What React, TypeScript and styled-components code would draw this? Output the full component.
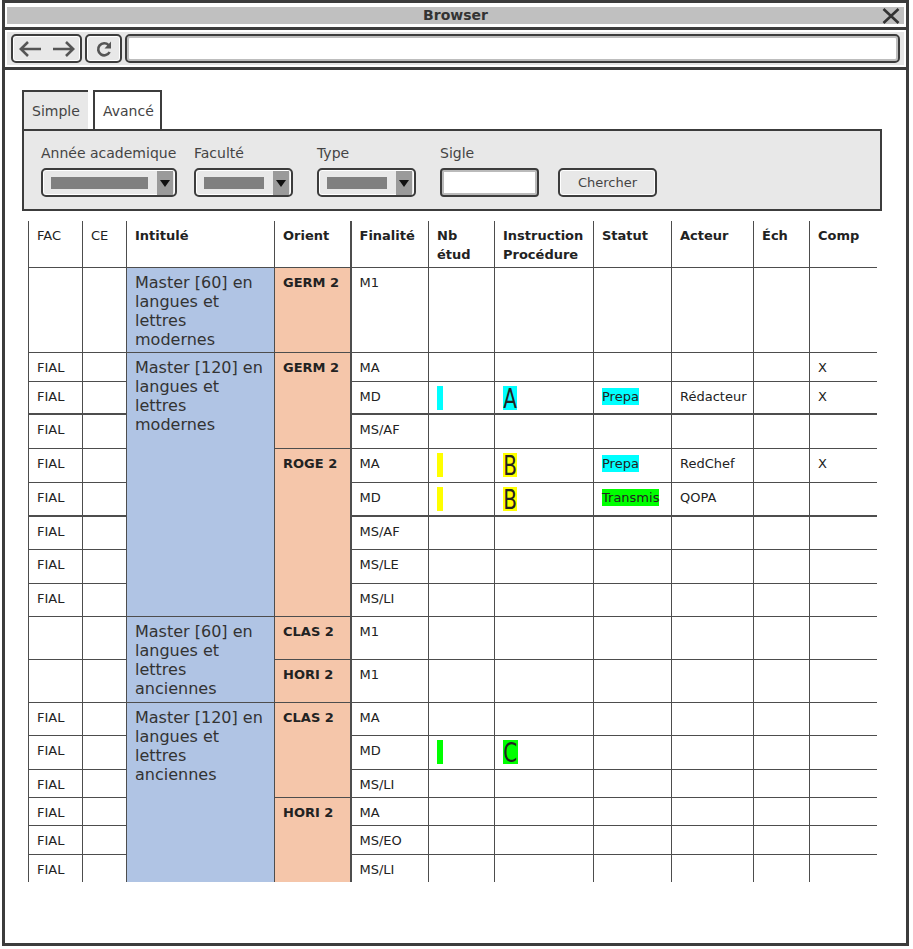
import React from 'react';
import styled, { createGlobalStyle } from 'styled-components';

const FONT = `"DejaVu Sans", "Liberation Sans", sans-serif`;
const DARK = '#3c3c3c';
const LINE = '#4d4d4d';
const PANEL = '#e8e8e8';
const BLUE = '#b0c4e4';
const SALMON = '#f5c6aa';
const CYAN = '#00ffff';
const YELLOW = '#ffff00';
const GREEN = '#00ff00';

const GlobalStyle = createGlobalStyle`
  html, body { margin: 0; padding: 0; background: #fff; }
  body { font-family: ${FONT}; color: #333; }
  * { box-sizing: border-box; }
`;

const Frame = styled.div`
  margin-left: 2px;
  width: 907px;
  height: 946px;
  border: 3px solid ${DARK};
  background: #fff;
  display: flex;
  flex-direction: column;
`;

const TitleBar = styled.div`
  flex: none;
  margin: 4px 2px 3px;
  height: 17px;
  background: #c0c0c0;
  display: grid;
  grid-template-columns: 1fr auto 1fr;
  align-items: center;
  font: bold 14px/17px ${FONT};
  color: #333;
`;

const Title = styled.span`
  grid-column: 2;
`;

const CloseIcon = styled.svg`
  grid-column: 3;
  justify-self: end;
  margin-right: 4px;
  display: block;
`;

const Rule = styled.div`
  flex: none;
  height: 3px;
  background: ${DARK};
`;

const Toolbar = styled.div`
  flex: none;
  margin: 2px;
  height: 33px;
  background: #e6e6e6;
  display: flex;
  align-items: center;
  gap: 3px;
  padding: 0 4px;
`;

const NavButton = styled.div<{ $w: number }>`
  flex: none;
  width: ${(p) => p.$w}px;
  height: 29px;
  border: 2px solid ${DARK};
  border-radius: 5px;
  box-shadow: inset 0 0 0 1px #fff;
  background: #e8e8e8;
  display: flex;
  align-items: center;
  justify-content: center;
  gap: 10px;
`;

const UrlField = styled.div`
  flex: 1;
  height: 29px;
  border: 2px solid ${DARK};
  border-radius: 5px;
  box-shadow: inset 0 0 0 2px #bdbdbd;
  background: #fff;
`;

const Content = styled.div`
  flex: 1;
  padding: 20px 0 0 17px;
`;

const Tabs = styled.div`
  display: flex;
  align-items: flex-end;
`;

const Tab = styled.div<{ $active?: boolean; $w: number }>`
  width: ${(p) => p.$w}px;
  height: 39px;
  padding-left: 8px;
  border: 2px solid ${DARK};
  border-bottom: 0;
  display: flex;
  align-items: center;
  font-size: 14px;
  color: #444;
  ${(p) =>
    p.$active
      ? `border-right: 0; margin-right: 5px; background: ${PANEL};`
      : 'background: #fff;'}
`;

const Panel = styled.div`
  width: 860px;
  height: 82px;
  border: 2px solid ${DARK};
  background: ${PANEL};
  padding: 14px 0 0 17px;
  display: grid;
  grid-template-columns: 153px 123px 123px 118px 99px;
  grid-template-rows: 17px 29px;
  row-gap: 6px;
`;

const Label = styled.div`
  grid-row: 1;
  font-size: 14px;
  line-height: 17px;
  color: #444;
  white-space: nowrap;
`;

const Select = styled.div<{ $w: number }>`
  grid-row: 2;
  width: ${(p) => p.$w}px;
  height: 29px;
  border: 2px solid ${DARK};
  border-radius: 5px;
  box-shadow: inset 0 0 0 1px #fff;
  background: ${PANEL};
  display: flex;
  align-items: center;
  padding-left: 8px;
`;

const Placeholder = styled.div<{ $w: number }>`
  width: ${(p) => p.$w}px;
  height: 12px;
  background: #808080;
`;

const Drop = styled.div`
  margin: 1px 2px 0 auto;
  align-self: stretch;
  width: 16px;
  background: #9a9a9a;
  display: flex;
  align-items: center;
  justify-content: center;
  &::after {
    content: '';
    border-left: 5px solid transparent;
    border-right: 5px solid transparent;
    border-top: 7px solid #111;
  }
`;

const TextInput = styled.div`
  grid-row: 2;
  width: 99px;
  height: 29px;
  border: 2px solid ${DARK};
  border-radius: 4px;
  box-shadow: inset 0 0 0 2px #bbb;
  background: #fff;
`;

const SearchButton = styled.div`
  grid-row: 2;
  width: 99px;
  height: 29px;
  border: 2px solid ${DARK};
  border-radius: 5px;
  box-shadow: inset 0 0 0 1px #fff;
  background: ${PANEL};
  display: flex;
  align-items: center;
  justify-content: center;
  font-size: 13px;
  color: #444;
`;

const Table = styled.table`
  margin: 10px 0 0 6px;
  width: 848px;
  table-layout: fixed;
  border-collapse: collapse;
  font-size: 13px;
  color: #222;
`;

const Col = styled.col<{ $w: number }>`
  width: ${(p) => p.$w}px;
`;

const HeadRow = styled.tr`
  height: 46px;
`;

const Th = styled.th<{ $bold?: boolean; $sep?: boolean }>`
  text-align: left;
  vertical-align: top;
  padding: 5px 8px 0;
  font-weight: ${(p) => (p.$bold ? 700 : 400)};
  line-height: 19px;
  border-left: ${(p) => (p.$sep ? 2 : 1)}px solid ${LINE};
`;

const Row = styled.tr<{ $h: number; $thick?: boolean }>`
  height: ${(p) => p.$h}px;
  ${(p) => (p.$thick ? '& > td { border-top-width: 2px; }' : '')}
`;

const Td = styled.td<{ $sep?: boolean }>`
  vertical-align: top;
  padding: 7px 8px 0;
  line-height: 16px;
  border-left: ${(p) => (p.$sep ? 2 : 1)}px solid ${LINE};
  border-top: 1px solid ${LINE};
  white-space: nowrap;
`;

const TitleCell = styled(Td)`
  background: ${BLUE};
  font-size: 16px;
  line-height: 19px;
  padding: 5px 4px 0 8px;
  color: #333;
  white-space: normal;
`;

const OrientCell = styled(Td)`
  background: ${SALMON};
  font-weight: 700;
`;

const Bar = styled.span<{ $c: string }>`
  display: inline-block;
  vertical-align: top;
  margin-top: -3px;
  width: 6px;
  height: 24px;
  background: ${(p) => p.$c};
`;

const Letter = styled.span<{ $c: string }>`
  display: inline-block;
  vertical-align: top;
  margin-top: -3px;
  height: 24px;
  padding: 0 0.3px;
  background: ${(p) => p.$c};
`;

const Glyph = styled.span`
  display: inline-block;
  font-size: 20px;
  line-height: 24px;
  transform: scaleY(1.3);
  transform-origin: 50% 9px;
`;

const Tag = styled.span<{ $c: string }>`
  display: inline-block;
  vertical-align: top;
  margin-top: -1px;
  line-height: 17px;
  background: ${(p) => p.$c};
`;

type Line = {
  h: number;
  thick?: boolean;
  fac?: string;
  title?: { text: string; span: number };
  orient?: { text: string; span: number };
  fin: string;
  mark?: string;
  letter?: string;
  status?: { text: string; color: string };
  actor?: string;
  comp?: string;
};

const lines: Line[] = [
  { h: 85, title: { text: 'Master [60] en langues et lettres modernes', span: 1 }, orient: { text: 'GERM 2', span: 1 }, fin: 'M1' },
  { h: 29, fac: 'FIAL', title: { text: 'Master [120] en langues et lettres modernes', span: 8 }, orient: { text: 'GERM 2', span: 3 }, fin: 'MA', comp: 'X' },
  { h: 33, fac: 'FIAL', fin: 'MD', mark: CYAN, letter: 'A', status: { text: 'Prepa', color: CYAN }, actor: 'Rédacteur', comp: 'X' },
  { h: 34, thick: true, fac: 'FIAL', fin: 'MS/AF' },
  { h: 34, fac: 'FIAL', orient: { text: 'ROGE 2', span: 5 }, fin: 'MA', mark: YELLOW, letter: 'B', status: { text: 'Prepa', color: CYAN }, actor: 'RedChef', comp: 'X' },
  { h: 34, fac: 'FIAL', fin: 'MD', mark: YELLOW, letter: 'B', status: { text: 'Transmis', color: GREEN }, actor: 'QOPA' },
  { h: 33, thick: true, fac: 'FIAL', fin: 'MS/AF' },
  { h: 34, fac: 'FIAL', fin: 'MS/LE' },
  { h: 33, fac: 'FIAL', fin: 'MS/LI' },
  { h: 43, title: { text: 'Master [60] en langues et lettres anciennes', span: 2 }, orient: { text: 'CLAS 2', span: 1 }, fin: 'M1' },
  { h: 43, orient: { text: 'HORI 2', span: 1 }, fin: 'M1' },
  { h: 33, fac: 'FIAL', title: { text: 'Master [120] en langues et lettres anciennes', span: 6 }, orient: { text: 'CLAS 2', span: 3 }, fin: 'MA' },
  { h: 34, fac: 'FIAL', fin: 'MD', mark: GREEN, letter: 'C' },
  { h: 28, fac: 'FIAL', fin: 'MS/LI' },
  { h: 28, fac: 'FIAL', orient: { text: 'HORI 2', span: 3 }, fin: 'MA' },
  { h: 29, fac: 'FIAL', fin: 'MS/EO' },
  { h: 28, fac: 'FIAL', fin: 'MS/LI' },
];

const colWidths = [54, 44, 148, 76, 78, 66, 99, 78, 82, 56, 67];

const ArrowLeft = () => (
  <svg width="23" height="16" viewBox="0 0 23 16">
    <path d="M1.5 8 H22 M9 1 L1.8 8 L9 15" stroke="#555" strokeWidth="2.6" fill="none" />
  </svg>
);

const ArrowRight = () => (
  <svg width="23" height="16" viewBox="0 0 23 16">
    <path d="M21.5 8 H1 M14 1 L21.2 8 L14 15" stroke="#555" strokeWidth="2.6" fill="none" />
  </svg>
);

const Reload = () => (
  <svg width="18" height="18" viewBox="0 0 18 18">
    <path d="M13.6 5.2 A6 6 0 1 0 14.6 12" stroke="#555" strokeWidth="2.6" fill="none" />
    <polygon points="16,1.5 16,8.5 9.5,8.5" fill="#555" />
  </svg>
);

export default function App() {
  return (
    <>
      <GlobalStyle />
      <Frame>
        <TitleBar>
          <Title>Browser</Title>
          <CloseIcon width="18" height="16" viewBox="0 0 18 16">
            <path d="M1.5 1 L16.5 15 M16.5 1 L1.5 15" stroke="#333" strokeWidth="2.6" />
          </CloseIcon>
        </TitleBar>
        <Rule />
        <Toolbar>
          <NavButton $w={71}>
            <ArrowLeft />
            <ArrowRight />
          </NavButton>
          <NavButton $w={37}>
            <Reload />
          </NavButton>
          <UrlField />
        </Toolbar>
        <Rule />
        <Content>
          <Tabs>
            <Tab $active $w={66}>Simple</Tab>
            <Tab $w={69}>Avancé</Tab>
          </Tabs>
          <Panel>
            <Label>Année academique</Label>
            <Label>Faculté</Label>
            <Label>Type</Label>
            <Label>Sigle</Label>
            <Select $w={136}>
              <Placeholder $w={97} />
              <Drop />
            </Select>
            <Select $w={99}>
              <Placeholder $w={60} />
              <Drop />
            </Select>
            <Select $w={99}>
              <Placeholder $w={60} />
              <Drop />
            </Select>
            <TextInput />
            <SearchButton>Chercher</SearchButton>
          </Panel>
          <Table>
            <colgroup>
              {colWidths.map((w, i) => (
                <Col key={i} $w={w} />
              ))}
            </colgroup>
            <thead>
              <HeadRow>
                <Th>FAC</Th>
                <Th>CE</Th>
                <Th $bold>Intitulé</Th>
                <Th $bold>Orient</Th>
                <Th $bold $sep>Finalité</Th>
                <Th $bold>
                  Nb
                  <br />
                  étud
                </Th>
                <Th $bold>
                  Instruction
                  <br />
                  Procédure
                </Th>
                <Th $bold>Statut</Th>
                <Th $bold>Acteur</Th>
                <Th $bold>Éch</Th>
                <Th $bold>Comp</Th>
              </HeadRow>
            </thead>
            <tbody>
              {lines.map((l, i) => (
                <Row key={i} $h={l.h} $thick={l.thick}>
                  <Td>{l.fac}</Td>
                  <Td />
                  {l.title && <TitleCell rowSpan={l.title.span}>{l.title.text}</TitleCell>}
                  {l.orient && <OrientCell rowSpan={l.orient.span}>{l.orient.text}</OrientCell>}
                  <Td $sep>{l.fin}</Td>
                  <Td>{l.mark && <Bar $c={l.mark} />}</Td>
                  <Td>
                    {l.letter && l.mark && (
                      <Letter $c={l.mark}>
                        <Glyph>{l.letter}</Glyph>
                      </Letter>
                    )}
                  </Td>
                  <Td>{l.status && <Tag $c={l.status.color}>{l.status.text}</Tag>}</Td>
                  <Td>{l.actor}</Td>
                  <Td />
                  <Td>{l.comp}</Td>
                </Row>
              ))}
            </tbody>
          </Table>
        </Content>
      </Frame>
    </>
  );
}
